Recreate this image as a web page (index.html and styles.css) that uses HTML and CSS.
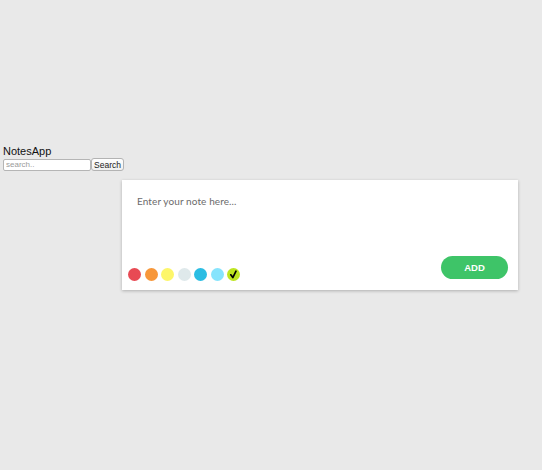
FILE: index.html
```html
<!DOCTYPE html>
<html>
<head>
<meta charset="utf-8">
<link rel="stylesheet" href="styles.css">
</head>
<body>
<header class="top">
  <div class="brand">NotesApp</div>
  <form class="search">
    <input class="search-input" type="text" placeholder="search..">
    <button class="search-btn" type="button">Search</button>
  </form>
</header>
<main class="main">
  <section class="card">
    <textarea class="note" placeholder="Enter your note here..."></textarea>
    <div class="card-foot">
      <div class="colors">
        <span class="dot red"></span>
        <span class="dot orange"></span>
        <span class="dot yellow"></span>
        <span class="dot grey"></span>
        <span class="dot blue"></span>
        <span class="dot sky"></span>
        <span class="dot lime selected"><svg viewBox="0 0 13 13" width="13" height="13"><path d="M3.8 6.8 L5.8 9.6 L9 3.2" fill="none" stroke="#000" stroke-width="1.7" stroke-linecap="round" stroke-linejoin="round"/></svg></span>
      </div>
      <button class="add" type="button">ADD</button>
    </div>
  </section>
</main>
</body>
</html>
```
FILE: styles.css
```css
html, body {
  margin: 0;
  padding: 0;
  background: #e9e9e9;
  font-family: "Liberation Sans", Arial, sans-serif;
}
body {
  padding-top: 144px;
  height: 470px;
  box-sizing: border-box;
  overflow: hidden;
}
.top {
  padding-left: 3px;
}
.brand {
  font-size: 11px;
  line-height: 14px;
  color: #111;
}
.search {
  display: flex;
  align-items: center;
  margin: 0;
  height: 13px;
}
.search-input {
  width: 88px;
  height: 12px;
  box-sizing: border-box;
  border: 1px solid #b5b5b5;
  border-radius: 2px;
  padding: 0 2px;
  font-size: 8px;
  font-family: "Liberation Sans", Arial, sans-serif;
  background: #fff;
  margin: 0;
}
.search-input::placeholder {
  color: #9a9a9a;
}
.search-btn {
  width: 33px;
  height: 13px;
  box-sizing: border-box;
  border: 1px solid #b3b3b3;
  border-radius: 3px;
  background: linear-gradient(#ffffff, #f0f0f0);
  font-size: 8.5px;
  font-weight: normal;
  font-family: "Liberation Sans", Arial, sans-serif;
  padding: 0;
  margin: 0;
  color: #222;
}
.main {
  padding: 9px 24px 0 122px;
}
.card {
  width: 396px;
  height: 110px;
  box-sizing: border-box;
  background: #fff;
  box-shadow: 0 1px 3px rgba(0,0,0,0.25);
  display: flex;
  flex-direction: column;
  padding: 15px 10px 9px 6px;
}
.note {
  flex: 1;
  border: none;
  outline: none;
  resize: none;
  font-family: "Lato", "Liberation Sans", sans-serif;
  font-size: 10px;
  color: #555;
  padding: 0 0 0 9px;
  margin: 0;
}
.note::placeholder {
  color: #6b6b6b;
  letter-spacing: 0.1px;
}
.card-foot {
  display: flex;
  justify-content: space-between;
  align-items: flex-end;
}
.colors {
  display: flex;
  gap: 3.5px;
}
.dot {
  width: 13px;
  height: 13px;
  border-radius: 50%;
  display: flex;
  align-items: center;
  justify-content: center;
}
.red { background: #e84a54; }
.orange { background: #f7973a; }
.yellow { background: #fdf66a; }
.grey { background: #dfe9eb; }
.blue { background: #2bbde3; }
.sky { background: #86e4fd; }
.lime { background: #bde521; }
.add {
  width: 67px;
  height: 23px;
  border: none;
  border-radius: 12px;
  background: #3ec468;
  color: #fff;
  font-family: "Liberation Sans", Arial, sans-serif;
  font-weight: bold;
  font-size: 9.5px;
  padding: 0;
  margin-bottom: 2px;
}
```
